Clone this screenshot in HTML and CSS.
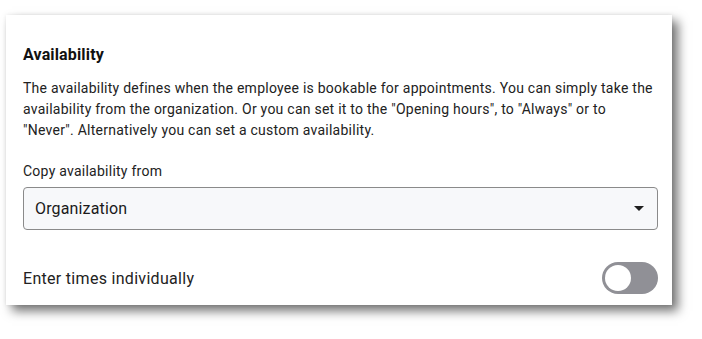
FILE: index.html
```html
<!DOCTYPE html>
<html>
<head>
<meta charset="utf-8">
<link rel="stylesheet" href="styles.css">
</head>
<body>
<div class="page">
<div class="card">
  <h2 class="title">Availability</h2>
  <p class="desc">The availability defines when the employee is bookable for appointments. You can simply take the availability from the organization. Or you can set it to the "Opening hours", to "Always" or to "Never". Alternatively you can set a custom availability.</p>
  <label class="field-label">Copy availability from</label>
  <div class="select">
    <span class="select-value">Organization</span>
    <svg class="caret" width="10" height="5" viewBox="0 0 10 5"><path d="M0 0 L10 0 L5 5 Z" fill="#1f1f1f"/></svg>
  </div>
  <div class="toggle-row">
    <span class="toggle-label">Enter times individually</span>
    <span class="toggle"><span class="knob"></span></span>
  </div>
</div>
</div>
</body>
</html>
```
FILE: styles.css
```css
html, body {
  margin: 0;
  padding: 0;
  background: #ffffff;
}
body {
  font-family: Roboto, "Liberation Sans", sans-serif;
  color: #1f1f1f;
}
.page {
  min-height: 339px;
  padding-top: 15px;
  padding-left: 6px;
  box-sizing: border-box;
}
.card {
  width: 666px;
  height: 290px;
  box-sizing: border-box;
  padding: 28px 14px 0 17px;
  background: #ffffff;
  box-shadow: 6px 6px 10px rgba(0, 0, 0, 0.55), 0 0 4px rgba(0, 0, 0, 0.08);
  display: flex;
  flex-direction: column;
}
.title {
  margin: 0;
  font-size: 16px;
  line-height: 24px;
  font-weight: 700;
  letter-spacing: 0.15px;
  color: #111;
}
.desc {
  margin: 11px 0 0 0;
  font-size: 14px;
  line-height: 21px;
  letter-spacing: 0.25px;
  color: #222;
}
.field-label {
  margin-top: 20px;
  font-size: 14px;
  line-height: 20px;
  letter-spacing: 0.25px;
  color: #222;
}
.select {
  margin-top: 6px;
  height: 43px;
  box-sizing: border-box;
  border: 1px solid #8a8a8a;
  border-radius: 4px;
  background: #f7f8fa;
  display: flex;
  align-items: center;
  justify-content: space-between;
  padding: 0 13px 0 11px;
}
.select-value {
  font-size: 16px;
  letter-spacing: 0.15px;
  color: #1a1a1a;
}
.toggle-row {
  margin-top: 32px;
  display: flex;
  align-items: center;
  justify-content: space-between;
}
.toggle-label {
  font-size: 16px;
  letter-spacing: 0.3px;
  color: #222;
}
.toggle {
  width: 56px;
  height: 32px;
  border-radius: 16px;
  background: #909096;
  display: flex;
  align-items: center;
  padding-left: 3px;
  box-sizing: border-box;
}
.knob {
  width: 26px;
  height: 26px;
  border-radius: 50%;
  background: #ffffff;
}
```
